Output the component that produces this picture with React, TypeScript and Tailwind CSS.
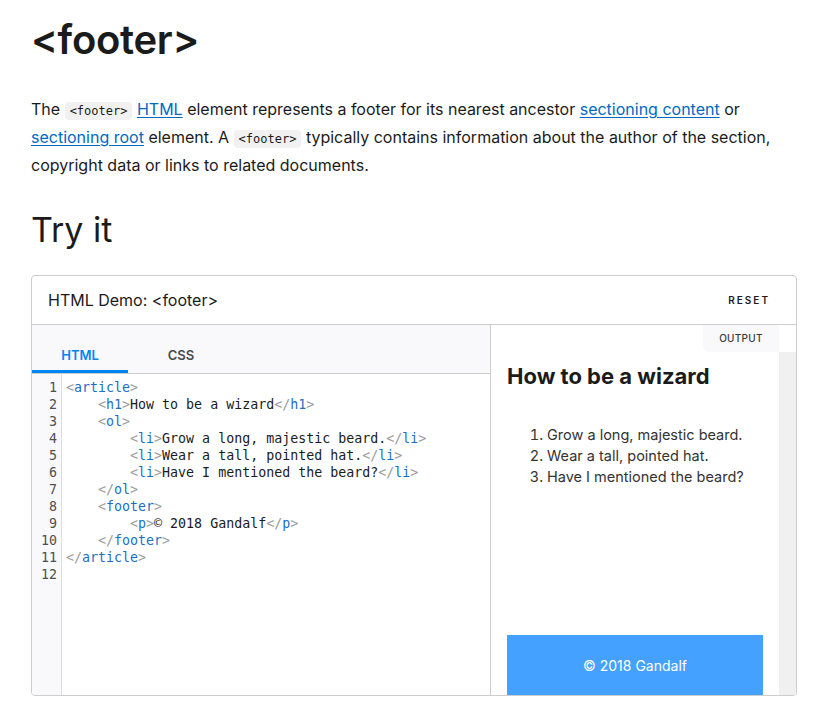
const sans = "font-['Inter','Noto_Sans',sans-serif]";
const mono = "font-['DejaVu_Sans_Mono','Liberation_Mono',monospace]";

type Tok = { t: string; k: "b" | "n" | "x" };

function tag(name: string, close = false): Tok[] {
  return [
    { t: close ? "</" : "<", k: "b" },
    { t: name, k: "n" },
    { t: ">", k: "b" },
  ];
}

const lines: { indent: number; toks: Tok[] }[] = [
  { indent: 0, toks: tag("article") },
  { indent: 1, toks: [...tag("h1"), { t: "How to be a wizard", k: "x" }, ...tag("h1", true)] },
  { indent: 1, toks: tag("ol") },
  { indent: 2, toks: [...tag("li"), { t: "Grow a long, majestic beard.", k: "x" }, ...tag("li", true)] },
  { indent: 2, toks: [...tag("li"), { t: "Wear a tall, pointed hat.", k: "x" }, ...tag("li", true)] },
  { indent: 2, toks: [...tag("li"), { t: "Have I mentioned the beard?", k: "x" }, ...tag("li", true)] },
  { indent: 1, toks: tag("ol", true) },
  { indent: 1, toks: tag("footer") },
  { indent: 2, toks: [...tag("p"), { t: "© 2018 Gandalf", k: "x" }, ...tag("p", true)] },
  { indent: 1, toks: tag("footer", true) },
  { indent: 0, toks: tag("article", true) },
  { indent: 0, toks: [] },
];

const tokColor = {
  b: "text-[#9a9a9a]",
  n: "text-[#1d6ec5]",
  x: "text-[#1b1b1b]",
};

function Code({ children }: { children: string }) {
  return (
    <code
      className={`${mono} text-[12px] leading-none bg-[#f2f1f1] rounded-[4px] px-[5px] py-[2px] text-[#1b1b1b]`}
    >
      {children}
    </code>
  );
}

function A({ children }: { children: string }) {
  return <a className="text-[#0069c2] underline underline-offset-[2px]">{children}</a>;
}

function Editor() {
  return (
    <div className="flex-1 flex flex-col min-w-0">
      <div className="bg-[#f9f9fb] pt-[17px] flex border-b border-[#cdcdcd]">
        <div
          className={`w-[96px] h-[31px] flex items-center justify-center text-[13px] font-semibold text-[#0085f2] border-b-[3px] border-[#0085f2] ${sans}`}
        >
          HTML
        </div>
        <div
          className={`w-[106px] h-[28px] flex items-center justify-center text-[13px] font-semibold text-[#4a4a4a] ${sans}`}
        >
          CSS
        </div>
      </div>
      <div className={`flex-1 flex ${mono} text-[13.3px] leading-[17px]`}>
        <div className="w-[30px] bg-[#f9f9fb] border-r border-[#dddddd] pt-[5px] pr-[4px] text-right text-[#4f4f4f]">
          {lines.map((_, i) => (
            <div key={i}>{i + 1}</div>
          ))}
        </div>
        <div className="flex-1 pt-[5px] pl-[4px] bg-white whitespace-pre">
          {lines.map((l, i) => (
            <div key={i} className="h-[17px]">
              {"    ".repeat(l.indent)}
              {l.toks.map((t, j) => (
                <span key={j} className={tokColor[t.k]}>
                  {t.t}
                </span>
              ))}
            </div>
          ))}
        </div>
      </div>
    </div>
  );
}

function Output() {
  return (
    <div className={`w-[306px] border-l border-[#cdcdcd] flex flex-col ${sans}`}>
      <div className="flex justify-end pr-[17px]">
        <div className="w-[76px] h-[27px] bg-[#f9f9fb] rounded-bl-[6px] flex items-center justify-center text-[10px] font-medium tracking-[0.3px] text-[#3a3a3a]">
          OUTPUT
        </div>
      </div>
      <div className="flex-1 flex">
        <div className="flex-1 flex flex-col px-[16px] pt-[10px]">
          <h1 className="text-[22px] leading-[28px] font-bold text-[#1b1b1b]">How to be a wizard</h1>
          <ol className="list-decimal pl-[40px] mt-[34px] text-[14.5px] leading-[21px] text-[#333333]">
            <li>Grow a long, majestic beard.</li>
            <li>Wear a tall, pointed hat.</li>
            <li>Have I mentioned the beard?</li>
          </ol>
          <footer className="mt-auto h-[60px] bg-[#45a1ff] flex items-center justify-center text-white text-[14px]">
            © 2018 Gandalf
          </footer>
        </div>
        <div className="w-[17px] bg-[#f0f0f0]" />
      </div>
    </div>
  );
}

export default function App() {
  return (
    <div className={`bg-white w-[823px] h-[708px] overflow-hidden pl-[31px] pt-[16px] text-[#1b1b1b] ${sans}`}>
      <h1 className="text-[40px] leading-[48px] font-semibold tracking-[-0.3px]">&lt;footer&gt;</h1>
      <p className="mt-[31px] w-[760px] text-[16px] leading-[28px]">
        The <Code>&lt;footer&gt;</Code> <A>HTML</A> element represents a footer for its nearest ancestor{" "}
        <A>sectioning content</A> or <A>sectioning root</A> element. A <Code>&lt;footer&gt;</Code> typically
        contains information about the author of the section, copyright data or links to related documents.
      </p>
      <h2 className="mt-[31px] text-[34px] leading-[40px] font-normal">Try it</h2>
      <div className="mt-[25px] w-[766px] h-[421px] border border-[#cdcdcd] rounded-[4px] flex flex-col overflow-hidden">
        <div className="h-[49px] shrink-0 border-b border-[#cdcdcd] flex items-center justify-between pl-[16px] pr-[26px]">
          <span className="text-[16px]">HTML Demo: &lt;footer&gt;</span>
          <span className="text-[10px] font-semibold tracking-[2px] text-[#1b1b1b]">RESET</span>
        </div>
        <div className="flex-1 flex min-h-0">
          <Editor />
          <Output />
        </div>
      </div>
    </div>
  );
}
